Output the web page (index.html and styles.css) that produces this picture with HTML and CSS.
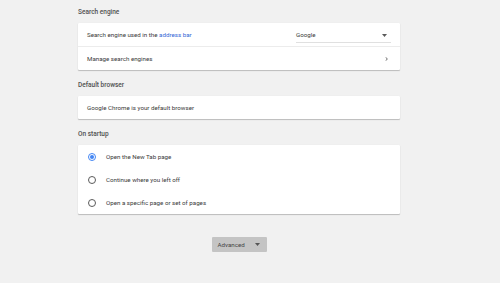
FILE: index.html
```html
<!DOCTYPE html>
<html lang="en">
<head>
    <meta charset="UTF-8">
    <title>Settings</title>
    <link rel="stylesheet" href="styles.css">
</head>
<body>
    <div class="main">
        <section class="section">
            <h2 class="heading">Search engine</h2>
            <div class="card">
                <div class="row">
                    <span class="row-label">Search engine used in the <a class="link" href="#">address bar</a></span>
                    <div class="select">
                        <span>Google</span>
                        <svg class="select-arrow" width="5" height="3" viewBox="0 0 5 3"><polygon points="0,0 5,0 2.5,3" fill="#5a5a5a"/></svg>
                    </div>
                </div>
                <div class="row row-divided">
                    <span class="row-label">Manage search engines</span>
                    <svg class="subpage-arrow" width="3" height="4" viewBox="0 0 3 4"><path d="M0.6 0.3 L2.4 2 L0.6 3.7" fill="none" stroke="#5a5a5a" stroke-width="0.9"/></svg>
                </div>
            </div>
        </section>

        <section class="section">
            <h2 class="heading">Default browser</h2>
            <div class="card">
                <div class="row">
                    <span class="row-label">Google Chrome is your default browser</span>
                </div>
            </div>
        </section>

        <section class="section">
            <h2 class="heading">On startup</h2>
            <div class="card">
                <div class="row radio-row">
                    <span class="radio checked"></span>
                    <span class="row-label">Open the New Tab page</span>
                </div>
                <div class="row radio-row">
                    <span class="radio"></span>
                    <span class="row-label">Continue where you left off</span>
                </div>
                <div class="row radio-row">
                    <span class="radio"></span>
                    <span class="row-label">Open a specific page or set of pages</span>
                </div>
            </div>
        </section>

        <div class="advanced-wrap">
            <button class="advanced">
                Advanced
                <svg width="5" height="3" viewBox="0 0 5 3"><polygon points="0,0 5,0 2.5,3" fill="#555"/></svg>
            </button>
        </div>
    </div>
</body>
</html>
```

FILE: styles.css
```css
* {
    margin: 0;
    padding: 0;
    box-sizing: border-box;
    font-family: Roboto, 'Liberation Sans', sans-serif;
}

body {
    background: #f1f1f1;
    color: #3a3a3a;
    font-size: 6.2px;
}

.main {
    width: 322px;
    margin-left: 78px;
}

.heading {
    font-size: 6.5px;
    font-weight: 500;
    color: #505050;
    line-height: 8px;
    padding: 11px 0 7px;
}

.section:first-child .heading {
    padding-top: 8px;
}

.card {
    background: #fff;
    border-radius: 1px;
    box-shadow:
        0 1px 1px rgba(0, 0, 0, 0.22),
        0 0 1px rgba(0, 0, 0, 0.08);
}

.row {
    height: 23px;
    display: flex;
    align-items: center;
    padding: 0 9px;
}

.row-divided {
    height: 24px;
    border-top: 1px solid #ececec;
    justify-content: space-between;
}

.row-label {
    flex: 1;
    line-height: 8px;
}

.link {
    color: #3367d6;
    text-decoration: none;
}

.select {
    width: 95px;
    height: 14px;
    display: flex;
    align-items: center;
    justify-content: space-between;
    padding: 0 4px 0 0;
    border-bottom: 1px solid #e0e0e0;
    margin-top: 2px;
}

.subpage-arrow {
    margin-right: 3px;
}

.radio-row {
    padding-left: 10px;
}

.radio {
    width: 8px;
    height: 8px;
    border: 1px solid #5a5a5a;
    border-radius: 50%;
    margin-right: 10px;
    display: flex;
    align-items: center;
    justify-content: center;
}

.radio.checked {
    border-color: #4285f4;
}

.radio.checked::after {
    content: '';
    width: 4px;
    height: 4px;
    border-radius: 50%;
    background: #4285f4;
}

.advanced-wrap {
    display: flex;
    justify-content: center;
    padding-top: 23px;
}

.advanced {
    width: 55px;
    height: 15px;
    background: #c4c4c4;
    border: none;
    border-radius: 1px;
    color: #444;
    font-size: 6.2px;
    display: flex;
    align-items: center;
    justify-content: space-between;
    padding: 0 7px 0 6px;
}
```
